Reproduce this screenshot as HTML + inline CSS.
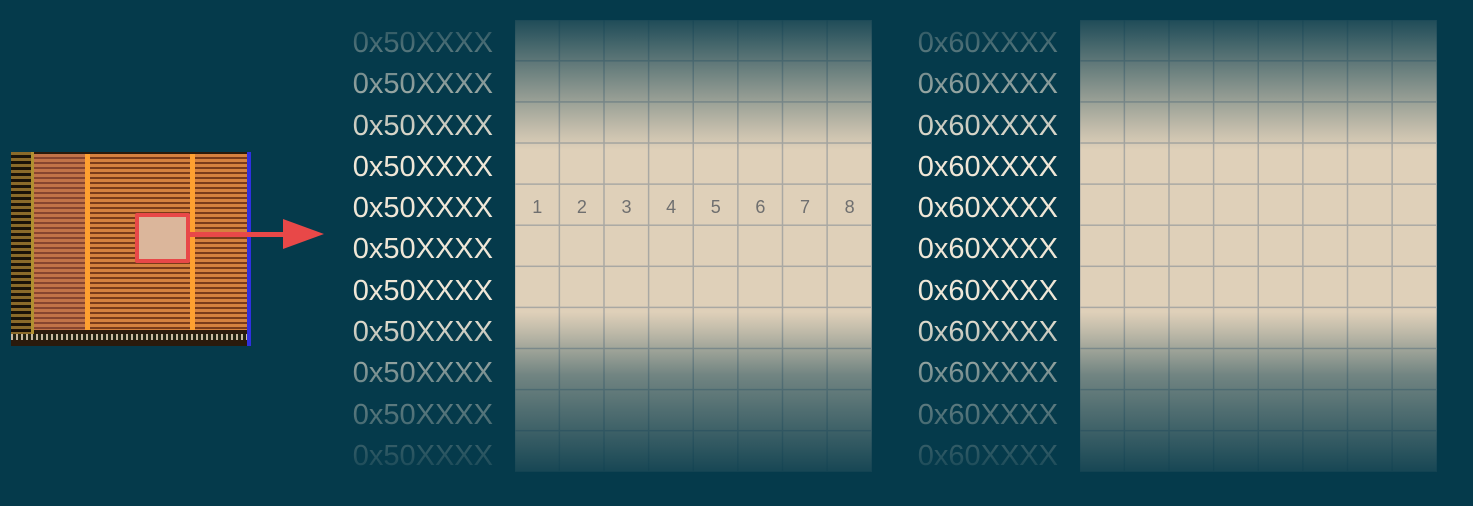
<!DOCTYPE html>
<html><head><style>
html,body{margin:0;padding:0;}
body{width:1473px;height:506px;background:#053a4b;position:relative;overflow:hidden;font-family:"Liberation Sans",sans-serif;}
.grid{position:absolute;top:20px;width:357px;height:452px;background-color:#dfd0b9;
background-image:linear-gradient(to right,#a9a8a3 1.5px,transparent 1.5px),linear-gradient(to bottom,#a9a8a3 1.5px,transparent 1.5px);
background-size:44.625px 100%,100% 41.1px;background-position:-1px 0,0 -1px;}
.fade{position:absolute;top:20px;height:453px;left:340px;width:1110px;
background:linear-gradient(to bottom,rgba(5,58,75,0.88) 0px,rgba(5,58,75,0.45) 62px,rgba(5,58,75,0.12) 110px,rgba(5,58,75,0) 130px,rgba(5,58,75,0) 292px,rgba(5,58,75,0.15) 312px,rgba(5,58,75,0.5) 355px,rgba(5,58,75,0.92) 453px);}
.lab{position:absolute;width:200px;text-align:right;color:#f0e7d7;font-size:29px;line-height:41.3px;}
.num{position:absolute;top:186px;left:515px;width:357px;height:41px;display:flex;}
.num span{flex:1;text-align:center;line-height:43px;color:#6f6f6f;font-size:18px;}
</style></head><body>
<div class="grid" style="left:515px"></div>
<div class="grid" style="left:1080px"></div>
<div class="num"><span>1</span><span>2</span><span>3</span><span>4</span><span>5</span><span>6</span><span>7</span><span>8</span></div>
<div class="lab" style="left:293px;top:23px">0x50XXXX<br>0x50XXXX<br>0x50XXXX<br>0x50XXXX<br>0x50XXXX<br>0x50XXXX<br>0x50XXXX<br>0x50XXXX<br>0x50XXXX<br>0x50XXXX<br>0x50XXXX</div>
<div class="lab" style="left:858px;top:23px">0x60XXXX<br>0x60XXXX<br>0x60XXXX<br>0x60XXXX<br>0x60XXXX<br>0x60XXXX<br>0x60XXXX<br>0x60XXXX<br>0x60XXXX<br>0x60XXXX<br>0x60XXXX</div>
<div class="fade"></div>
<!-- chip -->
<div style="position:absolute;left:11px;top:152px;width:240px;height:194px;background:#2a1a0c;">
 <div style="position:absolute;left:0;top:0;width:22px;height:188px;background:repeating-linear-gradient(to bottom,#8a6a2a 0 3px,#1a1208 3px 6px);"></div>
 <div style="position:absolute;left:20px;top:0;width:3px;height:188px;background:#b09030;"></div>
 <div style="position:absolute;left:23px;top:2px;width:213px;height:176px;background:repeating-linear-gradient(to bottom,#d5813f 0 3px,#7a3b1a 3px 5px);"></div>
 <div style="position:absolute;left:23px;top:2px;width:51px;height:176px;background:rgba(160,90,90,0.35);"></div>
 <div style="position:absolute;left:74px;top:2px;width:5px;height:176px;background:#ffa030;"></div>
 <div style="position:absolute;left:179px;top:2px;width:5px;height:176px;background:#ffa030;"></div>
 <div style="position:absolute;left:0;top:182px;width:240px;height:6px;background:repeating-linear-gradient(to right,#c8b8a0 0 2px,#221 2px 5px);"></div>
 <div style="position:absolute;left:236px;top:0;width:4px;height:194px;background:#3030e0;"></div>
 <div style="position:absolute;left:124px;top:61px;width:47px;height:42px;border:4px solid #e84848;border-radius:2px;background:#dbb69b;"></div>
</div>
<div style="position:absolute;left:187px;top:232px;width:100px;height:5px;background:#e84848;"></div>
<svg style="position:absolute;left:283px;top:219px" width="42" height="31"><polygon points="0,0 41,15 0,30" fill="#e84848"/></svg>
</body></html>
